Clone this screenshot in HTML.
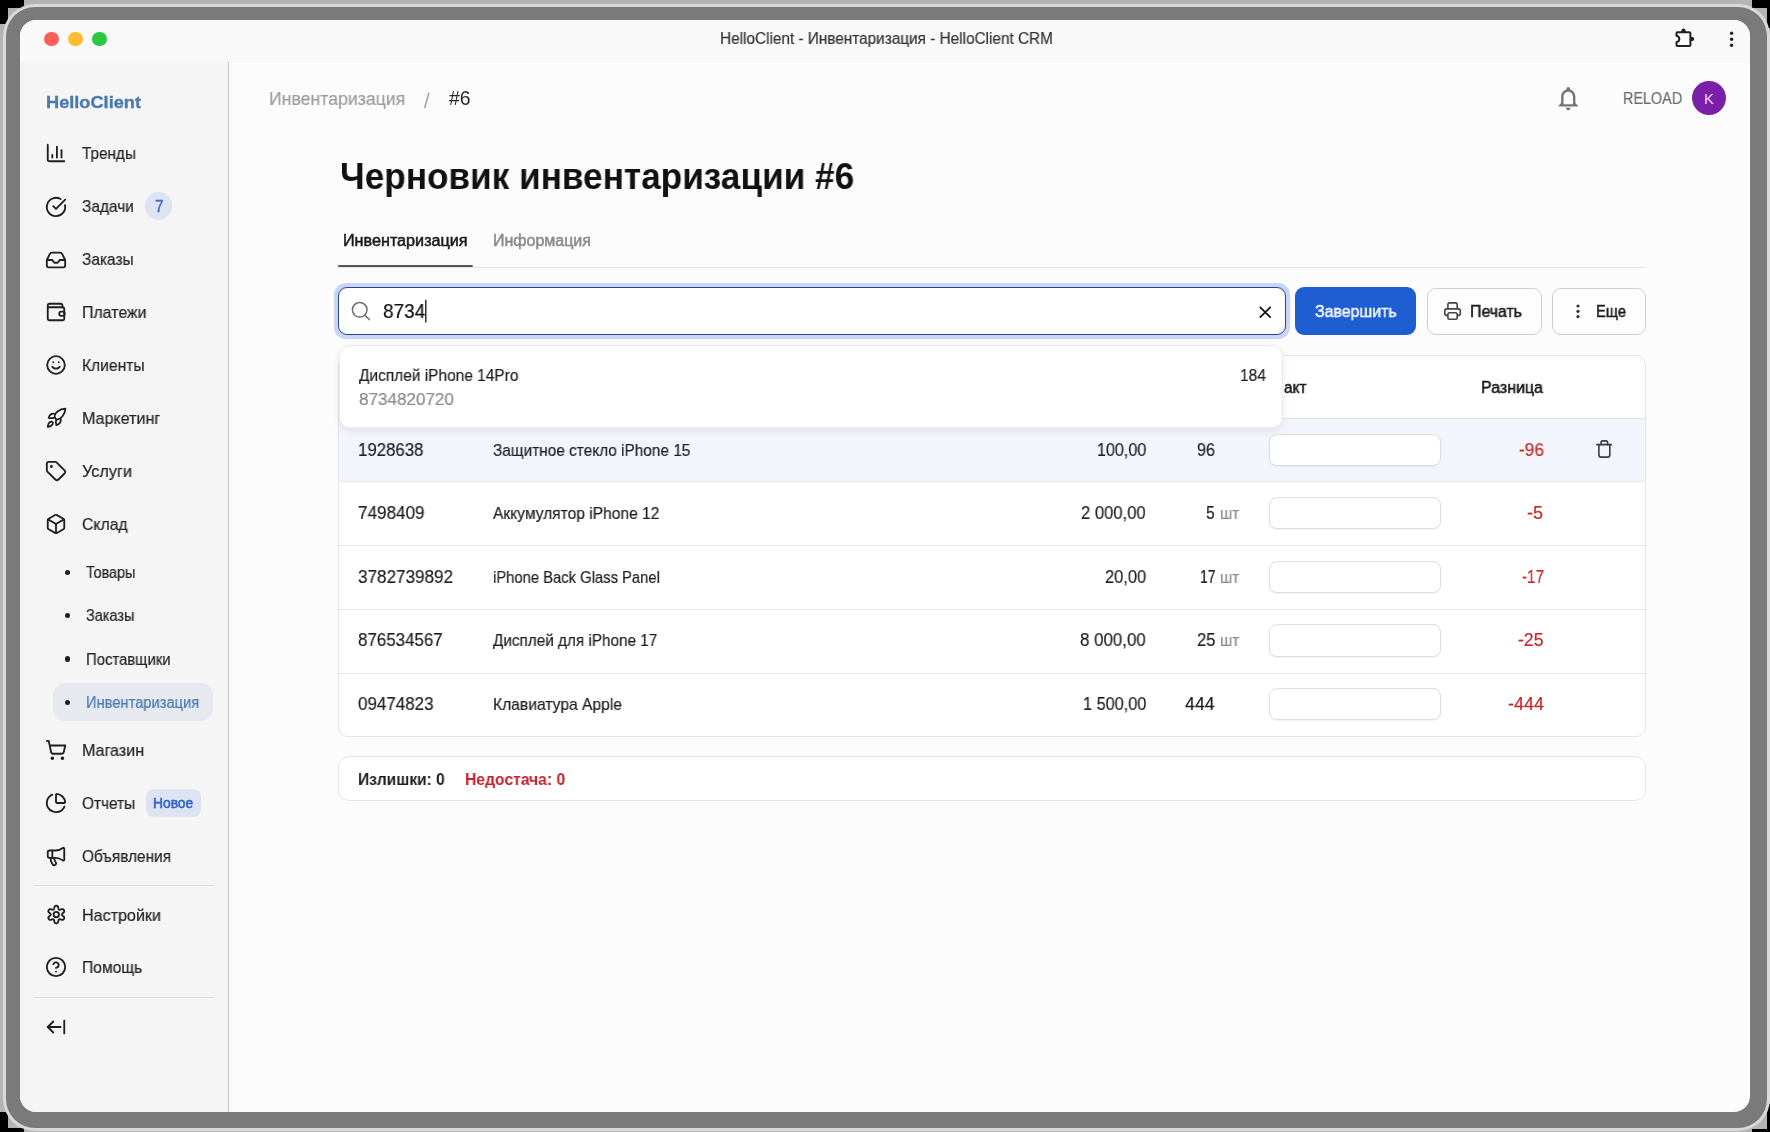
<!DOCTYPE html>
<html><head><meta charset="utf-8"><style>
*{box-sizing:border-box;margin:0;padding:0}
html,body{width:1770px;height:1132px;overflow:hidden;position:relative;background:#b4b4b4;font-family:"Liberation Sans",sans-serif;color:#1d1d1f}
.t{position:absolute;white-space:nowrap;line-height:1;will-change:transform}
.b{position:absolute}
svg{position:absolute;overflow:visible}
</style></head><body>
<div class="b" style="left:0;top:0;width:24px;height:8px;background:#000"></div><div class="b" style="left:0;top:0;width:8px;height:24px;background:#000"></div><div class="b" style="left:1752px;top:0;width:18px;height:7.5px;background:#000"></div><div class="b" style="left:1767px;top:0;width:3px;height:28px;background:#000"></div><div class="b" style="left:0;top:1112px;width:8px;height:20px;background:#000"></div><div class="b" style="left:0;top:1128px;width:24px;height:4px;background:#000"></div><div class="b" style="left:1752px;top:1129px;width:18px;height:3px;background:#000"></div><div class="b" style="left:1767px;top:1104px;width:3px;height:28px;background:#000"></div><div class="b" style="left:3px;top:3.5px;width:1766.5px;height:1127px;border-radius:32px;background:#d9d9d9"></div><div class="b" style="left:6px;top:7px;width:1761.4px;height:1121.3px;border-radius:29px;background:#7a7a7a"></div><div class="b" style="left:20px;top:20px;width:1730px;height:1092px;border-radius:16px;background:#fcfcfc;overflow:hidden"><div class="b" style="left:0;top:0;width:1730px;height:42px;background:#f9f9f9"></div><div class="b" style="left:0;top:42px;width:1730px;height:1px;background:#f8f8f8"></div><div class="b" style="left:0;top:42px;width:209px;height:1050px;background:#f5f5f5;border-right:1px solid #c8c8c8"></div></div>
<div class="b" style="left:44.25px;top:31.75px;width:14.5px;height:14.5px;border-radius:50%;background:#ff5f57"></div><div class="b" style="left:68.25px;top:31.75px;width:14.5px;height:14.5px;border-radius:50%;background:#febc2e"></div><div class="b" style="left:92.35px;top:31.75px;width:14.5px;height:14.5px;border-radius:50%;background:#28c840"></div>
<div class="t" style="left:720.10px;top:31.10px;font-size:15.8px;color:#333;font-weight:normal;letter-spacing:0.000px;transform:scaleX(0.9708);transform-origin:0 0;-webkit-text-stroke:0.2px #333;">HelloClient - Инвентаризация - HelloClient CRM</div>
<svg style="left:0;top:0" width="1770" height="1132" viewBox="0 0 1770 1132"><g fill="none" stroke="#222" stroke-width="2" stroke-linejoin="round">
<path d="M1676.5 33.2 Q1676.5 32.2 1677.5 32.2 H1689.4 Q1690.4 32.2 1690.4 33.2 V44.9 Q1690.4 45.9 1689.4 45.9 H1677.5 Q1676.5 45.9 1676.5 44.9 V42.3 Q1679.3 41.6 1679.3 39.05 Q1679.3 36.5 1676.5 35.8 Z"/>
</g><g fill="#222"><path d="M1681.2 32.2 Q1681.2 28.6 1683.5 28.6 Q1685.8 28.6 1685.8 32.2 Z"/><path d="M1690.4 36.8 Q1694.2 36.8 1694.2 39.05 Q1694.2 41.3 1690.4 41.3 Z"/><circle cx="1731.6" cy="33.2" r="1.7"/><circle cx="1731.6" cy="39.2" r="1.7"/><circle cx="1731.6" cy="45.3" r="1.7"/></g></svg>
<div class="t" style="left:45.90px;top:93.50px;font-size:17.4px;color:#4a78b0;font-weight:bold;letter-spacing:0.000px;transform:scaleX(1.0454);transform-origin:0 0;-webkit-text-stroke:0.35px #4a78b0;">HelloClient</div>
<div class="t" style="left:82.40px;top:145.20px;font-size:16.4px;color:#232323;font-weight:normal;letter-spacing:0.000px;transform:scaleX(0.9348);transform-origin:0 0;-webkit-text-stroke:0.2px #232323;">Тренды</div>
<svg style="left:45.10px;top:142.30px" width="22" height="22" viewBox="0 0 24 24" fill="none" stroke="#1f1f1f" stroke-width="2" stroke-linecap="round" stroke-linejoin="round"><path d="M3 3v16a2 2 0 0 0 2 2h16"/><path d="M18 17V9"/><path d="M13 17V5"/><path d="M8 17v-3"/></svg>
<div class="t" style="left:82.40px;top:198.40px;font-size:16.4px;color:#232323;font-weight:normal;letter-spacing:0.000px;transform:scaleX(0.9444);transform-origin:0 0;-webkit-text-stroke:0.2px #232323;">Задачи</div>
<svg style="left:45.10px;top:195.50px" width="22" height="22" viewBox="0 0 24 24" fill="none" stroke="#1f1f1f" stroke-width="2" stroke-linecap="round" stroke-linejoin="round"><path d="M21.801 10A10 10 0 1 1 17 3.335"/><path d="m9 11 3 3L22 4"/></svg>
<div class="t" style="left:82.40px;top:251.40px;font-size:16.4px;color:#232323;font-weight:normal;letter-spacing:0.000px;transform:scaleX(0.9413);transform-origin:0 0;-webkit-text-stroke:0.2px #232323;">Заказы</div>
<svg style="left:45.10px;top:248.50px" width="22" height="22" viewBox="0 0 24 24" fill="none" stroke="#1f1f1f" stroke-width="2" stroke-linecap="round" stroke-linejoin="round"><path d="M2 12h6l1.6 2.4a1.5 1.5 0 0 0 1.25.6h2.3a1.5 1.5 0 0 0 1.25-.6L16 12h6"/><path d="M5.45 5.11 2 12v6a2 2 0 0 0 2 2h16a2 2 0 0 0 2-2v-6l-3.45-6.89A2 2 0 0 0 16.76 4H7.24a2 2 0 0 0-1.79 1.11z"/></svg>
<div class="t" style="left:82.40px;top:304.20px;font-size:16.4px;color:#232323;font-weight:normal;letter-spacing:0.000px;transform:scaleX(0.9714);transform-origin:0 0;-webkit-text-stroke:0.2px #232323;">Платежи</div>
<svg style="left:45.10px;top:301.30px" width="22" height="22" viewBox="0 0 24 24" fill="none" stroke="#1f1f1f" stroke-width="2" stroke-linecap="round" stroke-linejoin="round"><path d="M3 6.8V5a2 2 0 0 1 2-2h12a2 2 0 0 1 2 2v1.8"/><path d="M3 6.8h16a2 2 0 0 1 2 2V19a2 2 0 0 1-2 2H5a2 2 0 0 1-2-2z"/><rect x="15.5" y="11.6" width="6" height="4.6" rx="2.2"/></svg>
<div class="t" style="left:82.40px;top:356.80px;font-size:16.4px;color:#232323;font-weight:normal;letter-spacing:0.000px;transform:scaleX(0.9519);transform-origin:0 0;-webkit-text-stroke:0.2px #232323;">Клиенты</div>
<svg style="left:45.10px;top:353.90px" width="22" height="22" viewBox="0 0 24 24" fill="none" stroke="#1f1f1f" stroke-width="2" stroke-linecap="round" stroke-linejoin="round"><circle cx="12" cy="12" r="9.6"/><path d="M8 14s1.5 2 4 2 4-2 4-2"/><path d="M9 9h.01"/><path d="M15 9h.01"/></svg>
<div class="t" style="left:82.40px;top:410.10px;font-size:16.4px;color:#232323;font-weight:normal;letter-spacing:0.000px;transform:scaleX(0.9806);transform-origin:0 0;-webkit-text-stroke:0.2px #232323;">Маркетинг</div>
<svg style="left:0;top:0" width="1770" height="1132"><g fill="none" stroke="#1f1f1f" stroke-width="1.75" stroke-linecap="round" stroke-linejoin="round"><path d="M55.3 418.4 C54.2 416.5 55 413.5 57.5 411.5 C60 409.5 63 408.7 65.4 408.6 C65.3 411 64.5 414 62.5 416.3 C60.5 418.5 58 419.8 56.8 419.3 C56.1 419.1 55.6 418.8 55.3 418.4 Z"/><path d="M54.8 414.1 C52.5 412.8 49.5 414.2 48.6 417.9 C50.5 418.4 52.8 418.2 54.2 417.6"/><path d="M60.6 418.6 C61.4 421.5 59.8 424.5 56.3 425.1 C55.6 423 55.7 421 56.3 419.6"/><path d="M47.7 427 C48 424.5 49.3 421.8 51.2 421.6 C52.6 421.5 53.3 422.6 52.6 424.2 C51.8 426 49.5 426.9 47.7 427 Z"/></g></svg>
<div class="t" style="left:82.40px;top:462.60px;font-size:16.4px;color:#232323;font-weight:normal;letter-spacing:0.000px;transform:scaleX(0.9915);transform-origin:0 0;-webkit-text-stroke:0.2px #232323;">Услуги</div>
<svg style="left:45.10px;top:459.70px" width="22" height="22" viewBox="0 0 24 24" fill="none" stroke="#1f1f1f" stroke-width="2" stroke-linecap="round" stroke-linejoin="round"><path d="M12.586 2.586A2 2 0 0 0 11.172 2H4a2 2 0 0 0-2 2v7.172a2 2 0 0 0 .586 1.414l8.704 8.704a2.426 2.426 0 0 0 3.42 0l6.58-6.58a2.426 2.426 0 0 0 0-3.42z"/><circle cx="7" cy="7" r=".6" fill="#1f1f1f"/></svg>
<div class="t" style="left:82.40px;top:515.80px;font-size:16.4px;color:#232323;font-weight:normal;letter-spacing:0.000px;transform:scaleX(0.9647);transform-origin:0 0;-webkit-text-stroke:0.2px #232323;">Склад</div>
<svg style="left:45.10px;top:512.90px" width="22" height="22" viewBox="0 0 24 24" fill="none" stroke="#1f1f1f" stroke-width="2" stroke-linecap="round" stroke-linejoin="round"><path d="M21 8a2 2 0 0 0-1-1.73l-7-4a2 2 0 0 0-2 0l-7 4A2 2 0 0 0 3 8v8a2 2 0 0 0 1 1.73l7 4a2 2 0 0 0 2 0l7-4A2 2 0 0 0 21 16Z"/><path d="m3.3 7 8.7 5 8.7-5"/><path d="M12 22V12"/></svg>
<div class="t" style="left:82.40px;top:742.00px;font-size:16.4px;color:#232323;font-weight:normal;letter-spacing:0.000px;transform:scaleX(0.9816);transform-origin:0 0;-webkit-text-stroke:0.2px #232323;">Магазин</div>
<svg style="left:45.10px;top:739.10px" width="22" height="22" viewBox="0 0 24 24" fill="none" stroke="#1f1f1f" stroke-width="2" stroke-linecap="round" stroke-linejoin="round"><circle cx="8" cy="21" r="1" fill="#1f1f1f"/><circle cx="19" cy="21" r="1" fill="#1f1f1f"/><path d="M2.05 2.05h2l2.66 12.42a2 2 0 0 0 2 1.58h9.78a2 2 0 0 0 1.95-1.57l1.65-7.43H5.12"/></svg>
<div class="t" style="left:82.40px;top:794.80px;font-size:16.4px;color:#232323;font-weight:normal;letter-spacing:0.000px;transform:scaleX(0.9400);transform-origin:0 0;-webkit-text-stroke:0.2px #232323;">Отчеты</div>
<svg style="left:45.10px;top:791.90px" width="22" height="22" viewBox="0 0 24 24" fill="none" stroke="#1f1f1f" stroke-width="2" stroke-linecap="round" stroke-linejoin="round"><path d="M21 12c.552 0 1.005-.449.95-.998a10 10 0 0 0-8.953-8.951c-.55-.055-.998.398-.998.95v8a1 1 0 0 0 1 1z"/><path d="M21.21 15.89A10 10 0 1 1 8 2.83"/></svg>
<div class="t" style="left:82.40px;top:847.70px;font-size:16.4px;color:#232323;font-weight:normal;letter-spacing:0.000px;transform:scaleX(0.9391);transform-origin:0 0;-webkit-text-stroke:0.2px #232323;">Объявления</div>
<svg style="left:45.10px;top:844.80px" width="22" height="22" viewBox="0 0 24 24" fill="none" stroke="#1f1f1f" stroke-width="2" stroke-linecap="round" stroke-linejoin="round"><path d="M11 6a13 13 0 0 0 8.4-2.8A1 1 0 0 1 21 4v12a1 1 0 0 1-1.6.8A13 13 0 0 0 11 14H5a2 2 0 0 1-2-2V8a2 2 0 0 1 2-2z"/><path d="M6 14a12 12 0 0 0 2.4 7.2 2 2 0 0 0 3.2-2.4A8 8 0 0 1 10 14"/><path d="M8 6v8"/></svg>
<div class="t" style="left:82.40px;top:906.80px;font-size:16.4px;color:#232323;font-weight:normal;letter-spacing:0.000px;transform:scaleX(0.9813);transform-origin:0 0;-webkit-text-stroke:0.2px #232323;">Настройки</div>
<div class="t" style="left:82.40px;top:959.30px;font-size:16.4px;color:#232323;font-weight:normal;letter-spacing:0.000px;transform:scaleX(0.9519);transform-origin:0 0;-webkit-text-stroke:0.2px #232323;">Помощь</div>
<svg style="left:45.10px;top:956.40px" width="22" height="22" viewBox="0 0 24 24" fill="none" stroke="#1f1f1f" stroke-width="2" stroke-linecap="round" stroke-linejoin="round"><circle cx="12" cy="12" r="10"/><path d="M9.09 9a3 3 0 0 1 5.83 1c0 2-3 3-3 3"/><path d="M12 17h.01"/></svg>
<svg style="left:0;top:0" width="1770" height="1132"><g fill="none" stroke="#1f1f1f" stroke-width="1.85" stroke-linejoin="round"><path d="M61.90 914.50 L61.93 914.70 L62.01 914.90 L62.15 915.11 L62.33 915.35 L62.55 915.60 L62.80 915.88 L63.08 916.19 L63.78 916.64 L64.04 917.02 L64.17 917.36 L64.21 917.70 L64.21 918.02 L64.15 918.33 L64.06 918.62 L63.92 918.90 L63.75 919.15 L63.54 919.39 L63.30 919.59 L63.03 919.75 L62.71 919.88 L62.35 919.95 L61.90 919.90 L61.16 919.53 L60.75 919.44 L60.38 919.36 L60.05 919.30 L59.75 919.26 L59.50 919.25 L59.28 919.28 L59.10 919.35 L58.94 919.47 L58.81 919.65 L58.69 919.87 L58.58 920.14 L58.47 920.46 L58.35 920.82 L58.23 921.22 L58.18 922.05 L57.99 922.47 L57.75 922.74 L57.49 922.95 L57.20 923.11 L56.91 923.21 L56.61 923.28 L56.30 923.30 L55.99 923.28 L55.69 923.21 L55.40 923.11 L55.11 922.95 L54.85 922.74 L54.61 922.47 L54.42 922.05 L54.37 921.22 L54.25 920.82 L54.13 920.46 L54.02 920.14 L53.91 919.87 L53.79 919.65 L53.66 919.47 L53.50 919.35 L53.32 919.28 L53.10 919.25 L52.85 919.26 L52.55 919.30 L52.22 919.36 L51.85 919.44 L51.44 919.53 L50.70 919.90 L50.25 919.95 L49.89 919.88 L49.57 919.75 L49.30 919.59 L49.06 919.39 L48.85 919.15 L48.68 918.90 L48.54 918.62 L48.45 918.33 L48.39 918.02 L48.39 917.70 L48.43 917.36 L48.56 917.02 L48.82 916.64 L49.52 916.19 L49.80 915.88 L50.05 915.60 L50.27 915.35 L50.45 915.11 L50.59 914.90 L50.67 914.70 L50.70 914.50 L50.67 914.30 L50.59 914.10 L50.45 913.89 L50.27 913.65 L50.05 913.40 L49.80 913.12 L49.52 912.81 L48.82 912.36 L48.56 911.98 L48.43 911.64 L48.39 911.30 L48.39 910.98 L48.45 910.67 L48.54 910.38 L48.68 910.10 L48.85 909.85 L49.06 909.61 L49.30 909.41 L49.57 909.25 L49.89 909.12 L50.25 909.05 L50.70 909.10 L51.44 909.47 L51.85 909.56 L52.22 909.64 L52.55 909.70 L52.85 909.74 L53.10 909.75 L53.32 909.72 L53.50 909.65 L53.66 909.53 L53.79 909.35 L53.91 909.13 L54.02 908.86 L54.13 908.54 L54.25 908.18 L54.37 907.78 L54.42 906.95 L54.61 906.53 L54.85 906.26 L55.11 906.05 L55.40 905.89 L55.69 905.79 L55.99 905.72 L56.30 905.70 L56.61 905.72 L56.91 905.79 L57.20 905.89 L57.49 906.05 L57.75 906.26 L57.99 906.53 L58.18 906.95 L58.23 907.78 L58.35 908.18 L58.47 908.54 L58.58 908.86 L58.69 909.13 L58.81 909.35 L58.94 909.53 L59.10 909.65 L59.28 909.72 L59.50 909.75 L59.75 909.74 L60.05 909.70 L60.38 909.64 L60.75 909.56 L61.16 909.47 L61.90 909.10 L62.35 909.05 L62.71 909.12 L63.03 909.25 L63.30 909.41 L63.54 909.61 L63.75 909.85 L63.92 910.10 L64.06 910.38 L64.15 910.67 L64.21 910.98 L64.21 911.30 L64.17 911.64 L64.04 911.98 L63.78 912.36 L63.08 912.81 L62.80 913.12 L62.55 913.40 L62.33 913.65 L62.15 913.89 L62.01 914.10 L61.93 914.30 Z"/><circle cx="56.3" cy="914.5" r="2.7"/></g></svg>
<svg style="left:45.30px;top:1015.50px" width="22" height="22" viewBox="0 0 24 24" fill="none" stroke="#1f1f1f" stroke-width="2" stroke-linecap="round" stroke-linejoin="round"><path d="m9 6-6 6 6 6"/><path d="M3 12h14"/><path d="M21 19V5"/></svg>
<div class="b" style="left:144.8px;top:192.4px;width:27.6px;height:27.6px;border-radius:50%;background:#dde3f2"></div><div class="t" style="left:154.50px;top:198.60px;font-size:15.6px;color:#3c6cd0;font-weight:normal;letter-spacing:0.000px;-webkit-text-stroke:0.2px #3c6cd0;-webkit-text-stroke:0.35px #3c6cd0;">7</div>
<div class="b" style="left:145.7px;top:788.6px;width:55.2px;height:28.3px;border-radius:8px;background:#dde3f2"></div><div class="t" style="left:153.20px;top:797.00px;font-size:13.8px;color:#2f62c9;font-weight:normal;letter-spacing:0.000px;transform:scaleX(0.9911);transform-origin:0 0;-webkit-text-stroke:0.5px #2f62c9;">Новое</div>
<div class="b" style="left:52.6px;top:682.8px;width:160.6px;height:38.6px;border-radius:12px;background:#e6e9ef"></div><div class="t" style="left:86.00px;top:565.30px;font-size:15.6px;color:#232323;font-weight:normal;letter-spacing:0.000px;transform:scaleX(0.9187);transform-origin:0 0;-webkit-text-stroke:0.2px #232323;">Товары</div>
<div class="b" style="left:64.9px;top:569.8px;width:5.4px;height:5.4px;border-radius:50%;background:#1f1f1f"></div><div class="t" style="left:86.00px;top:608.10px;font-size:15.6px;color:#232323;font-weight:normal;letter-spacing:0.000px;transform:scaleX(0.9282);transform-origin:0 0;-webkit-text-stroke:0.2px #232323;">Заказы</div>
<div class="b" style="left:64.9px;top:612.6px;width:5.4px;height:5.4px;border-radius:50%;background:#1f1f1f"></div><div class="t" style="left:86.00px;top:651.80px;font-size:15.6px;color:#232323;font-weight:normal;letter-spacing:0.000px;transform:scaleX(0.9535);transform-origin:0 0;-webkit-text-stroke:0.2px #232323;">Поставщики</div>
<div class="b" style="left:64.9px;top:656.3px;width:5.4px;height:5.4px;border-radius:50%;background:#1f1f1f"></div><div class="t" style="left:86.00px;top:695.20px;font-size:15.6px;color:#4a78b0;font-weight:normal;letter-spacing:0.000px;transform:scaleX(0.9418);transform-origin:0 0;-webkit-text-stroke:0.2px #4a78b0;">Инвентаризация</div>
<div class="b" style="left:64.9px;top:699.7px;width:5.4px;height:5.4px;border-radius:50%;background:#1f1f1f"></div><div class="b" style="left:34px;top:885px;width:180px;height:1px;background:#dedede"></div><div class="b" style="left:34px;top:997px;width:180px;height:1px;background:#dedede"></div><div class="t" style="left:268.50px;top:90.10px;font-size:18.9px;color:#9c9c9c;font-weight:normal;letter-spacing:0.000px;transform:scaleX(0.9360);transform-origin:0 0;-webkit-text-stroke:0.2px #9c9c9c;">Инвентаризация</div>
<svg style="left:0;top:0" width="1770" height="1132"><path d="M428.9 92.8 L424.7 108" stroke="#a6a6a6" stroke-width="1.6" fill="none"/></svg><div class="t" style="left:448.70px;top:89.10px;font-size:19.3px;color:#262626;font-weight:normal;letter-spacing:0.000px;transform:scaleX(1.0060);transform-origin:0 0;-webkit-text-stroke:0.2px #262626;-webkit-text-stroke:0px;">#6</div>
<svg style="left:1554.35px;top:83.8px" width="28.5" height="28.5" viewBox="0 0 24 24"><path fill="#757575" d="M12 22c1.1 0 2-.9 2-2h-4c0 1.1.89 2 2 2zm6-6v-5c0-3.07-1.64-5.64-4.5-6.32V4c0-.83-.67-1.5-1.5-1.5s-1.5.67-1.5 1.5v.68C7.63 5.36 6 7.92 6 11v5l-2 2v1h16v-1l-2-2zm-2 1H8v-6c0-2.48 1.51-4.5 4-4.5s4 2.02 4 4.5v6z"/></svg>
<div class="t" style="left:1622.80px;top:89.90px;font-size:16.2px;color:#6b6b6b;font-weight:normal;letter-spacing:0.000px;transform:scaleX(0.8886);transform-origin:0 0;-webkit-text-stroke:0.2px #6b6b6b;">RELOAD</div>
<div class="b" style="left:1692px;top:81.1px;width:34px;height:34px;border-radius:50%;background:#7b1fa8"></div><div class="t" style="left:1704.30px;top:91.70px;font-size:14.5px;color:#f4c6f7;font-weight:normal;letter-spacing:0.000px;-webkit-text-stroke:0.2px #f4c6f7;">K</div>
<div class="t" style="left:339.50px;top:158.50px;font-size:36.6px;color:#111;font-weight:bold;letter-spacing:0.000px;transform:scaleX(0.9615);transform-origin:0 0;">Черновик инвентаризации #6</div>
<div class="t" style="left:343.00px;top:233.00px;font-size:16px;color:#1a1a1a;font-weight:normal;letter-spacing:0.000px;transform:scaleX(1.0107);transform-origin:0 0;-webkit-text-stroke:0.5px #1a1a1a;">Инвентаризация</div>
<div class="t" style="left:492.90px;top:233.00px;font-size:16px;color:#8a8a8a;font-weight:normal;letter-spacing:0.000px;transform:scaleX(0.9984);transform-origin:0 0;-webkit-text-stroke:0.5px #8a8a8a;">Информация</div>
<div class="b" style="left:338px;top:266.5px;width:1307px;height:1px;background:#e4e4e4"></div><div class="b" style="left:338px;top:265px;width:135px;height:2px;border-radius:1px;background:#585858"></div>
<div class="b" style="left:333.5px;top:282.5px;width:956px;height:56.5px;border-radius:12px;background:#c9d4f6"></div><div class="b" style="left:337.5px;top:286.8px;width:948px;height:48px;border-radius:9px;background:#fff;border:1.6px solid #24488f"></div><svg style="left:0;top:0" width="1770" height="1132"><g fill="none" stroke="#6f6f6f" stroke-width="1.5" stroke-linecap="round"><circle cx="359.7" cy="309.8" r="7.3"/><path d="M365 315.2 L369.3 319.6"/></g><g fill="none" stroke="#111" stroke-width="1.7" stroke-linecap="round"><path d="M1260.3 307.3 L1270.2 317.2 M1270.2 307.3 L1260.3 317.2"/></g><path d="M425.8 299.8 V322.6" stroke="#111" stroke-width="1.3"/></svg>
<div class="t" style="left:382.70px;top:301.30px;font-size:20.2px;color:#111;font-weight:normal;letter-spacing:0.000px;transform:scaleX(0.9389);transform-origin:0 0;-webkit-text-stroke:0.2px #111;">8734</div>
<div class="b" style="left:1295.3px;top:287px;width:121px;height:48px;border-radius:9px;background:#1f5ed2"></div><div class="t" style="left:1315.00px;top:302.70px;font-size:16.2px;color:#f2f6ff;font-weight:normal;letter-spacing:0.000px;transform:scaleX(0.9814);transform-origin:0 0;-webkit-text-stroke:0.5px #f2f6ff;">Завершить</div>
<div class="b" style="left:1426.5px;top:287.5px;width:115px;height:47px;border-radius:9px;background:#fdfdfd;border:1px solid #cfcfcf"></div><div class="b" style="left:1552.2px;top:287.5px;width:93.6px;height:47px;border-radius:9px;background:#fdfdfd;border:1px solid #cfcfcf"></div><div class="t" style="left:1470.40px;top:302.90px;font-size:16.2px;color:#1a1a1a;font-weight:normal;letter-spacing:0.000px;transform:scaleX(0.9801);transform-origin:0 0;-webkit-text-stroke:0.5px #1a1a1a;">Печать</div>
<div class="t" style="left:1596.00px;top:302.90px;font-size:16.2px;color:#1a1a1a;font-weight:normal;letter-spacing:0.000px;transform:scaleX(0.9100);transform-origin:0 0;-webkit-text-stroke:0.5px #1a1a1a;">Еще</div>
<svg style="left:0;top:0" width="1770" height="1132"><g fill="none" stroke="#444" stroke-width="1.6" stroke-linejoin="round">
<path d="M1447.6 315.4 H1446.6 Q1444.8 315.4 1444.8 313.6 V310.7 Q1444.8 308.9 1446.6 308.9 H1458.5 Q1460.3 308.9 1460.3 310.7 V313.6 Q1460.3 315.4 1458.5 315.4 H1457.5"/>
<path d="M1447.9 308.9 V304.6 Q1447.9 302.9 1449.6 302.9 H1455.5 Q1457.2 302.9 1457.2 304.6 V308.9"/>
<rect x="1447.9" y="312.7" width="9.3" height="6.5" rx="1.7"/></g>
<g fill="#333"><circle cx="1578" cy="306" r="1.6"/><circle cx="1578" cy="311.3" r="1.6"/><circle cx="1578" cy="316.6" r="1.6"/></g></svg>
<div class="b" style="left:338px;top:354.5px;width:1308px;height:382px;border-radius:10px;background:#fff;border:1px solid #e4e4e4;overflow:hidden"><div class="b" style="left:0;top:62px;width:1308px;height:1px;background:#e2e2e2"></div><div class="b" style="left:0;top:63px;width:1308px;height:62px;background:#f2f5fc"></div><div class="b" style="left:0;top:125px;width:1308px;height:1px;background:#e9e9e9"></div><div class="b" style="left:0;top:189px;width:1308px;height:1px;background:#e9e9e9"></div><div class="b" style="left:0;top:253px;width:1308px;height:1px;background:#e9e9e9"></div><div class="b" style="left:0;top:317px;width:1308px;height:1px;background:#e9e9e9"></div></div>
<div class="t" style="left:1283.80px;top:378.80px;font-size:17.2px;color:#1a1a1a;font-weight:normal;letter-spacing:0.000px;transform:scaleX(0.8984);transform-origin:0 0;-webkit-text-stroke:0.5px #1a1a1a;">акт</div>
<div class="t" style="left:1481.00px;top:378.80px;font-size:17.2px;color:#1a1a1a;font-weight:normal;letter-spacing:0.000px;transform:scaleX(0.9296);transform-origin:0 0;-webkit-text-stroke:0.5px #1a1a1a;">Разница</div>
<div class="t" style="left:358.20px;top:441.50px;font-size:17.8px;color:#1f1f1f;font-weight:normal;letter-spacing:0.000px;transform:scaleX(0.9454);transform-origin:0 0;-webkit-text-stroke:0.2px #1f1f1f;">1928638</div>
<div class="t" style="left:492.90px;top:442.50px;font-size:16.6px;color:#1f1f1f;font-weight:normal;letter-spacing:0.000px;transform:scaleX(0.9275);transform-origin:0 0;-webkit-text-stroke:0.2px #1f1f1f;">Защитное стекло iPhone 15</div>
<div class="t" style="left:1096.70px;top:441.50px;font-size:17.6px;color:#1f1f1f;font-weight:normal;letter-spacing:0.000px;transform:scaleX(0.9162);transform-origin:0 0;-webkit-text-stroke:0.2px #1f1f1f;">100,00</div>
<div class="t" style="left:1197.10px;top:441.50px;font-size:17.6px;color:#1f1f1f;font-weight:normal;letter-spacing:0.000px;transform:scaleX(0.9193);transform-origin:0 0;-webkit-text-stroke:0.2px #1f1f1f;">96</div>
<div class="t" style="left:1518.60px;top:441.50px;font-size:17.6px;color:#c62828;font-weight:normal;letter-spacing:0.000px;transform:scaleX(0.9791);transform-origin:0 0;-webkit-text-stroke:0.2px #c62828;">-96</div>
<div class="b" style="left:1269.3px;top:433.5px;width:172px;height:32.3px;border-radius:8px;background:#fff;border:1px solid #dedede;box-shadow:0 1px 2px rgba(0,0,0,0.05)"></div><div class="t" style="left:358.20px;top:505.15px;font-size:17.8px;color:#1f1f1f;font-weight:normal;letter-spacing:0.000px;transform:scaleX(0.9612);transform-origin:0 0;-webkit-text-stroke:0.2px #1f1f1f;">7498409</div>
<div class="t" style="left:492.90px;top:506.15px;font-size:16.6px;color:#1f1f1f;font-weight:normal;letter-spacing:0.000px;transform:scaleX(0.9387);transform-origin:0 0;-webkit-text-stroke:0.2px #1f1f1f;">Аккумулятор iPhone 12</div>
<div class="t" style="left:1081.40px;top:505.15px;font-size:17.6px;color:#1f1f1f;font-weight:normal;letter-spacing:0.000px;transform:scaleX(0.9430);transform-origin:0 0;-webkit-text-stroke:0.2px #1f1f1f;">2 000,00</div>
<div class="t" style="left:1206.40px;top:505.15px;font-size:17.6px;color:#1f1f1f;font-weight:normal;letter-spacing:0.000px;transform:scaleX(0.8907);transform-origin:0 0;-webkit-text-stroke:0.2px #1f1f1f;">5</div>
<div class="t" style="left:1220.30px;top:506.15px;font-size:16px;color:#8a8a8a;font-weight:normal;letter-spacing:0.000px;transform:scaleX(0.9573);transform-origin:0 0;-webkit-text-stroke:0.2px #8a8a8a;">шт</div>
<div class="t" style="left:1527.40px;top:505.15px;font-size:17.6px;color:#c62828;font-weight:normal;letter-spacing:0.000px;transform:scaleX(1.0278);transform-origin:0 0;-webkit-text-stroke:0.2px #c62828;">-5</div>
<div class="b" style="left:1269.3px;top:497.15px;width:172px;height:32.3px;border-radius:8px;background:#fff;border:1px solid #dedede;box-shadow:0 1px 2px rgba(0,0,0,0.05)"></div><div class="t" style="left:358.20px;top:568.80px;font-size:17.8px;color:#1f1f1f;font-weight:normal;letter-spacing:0.000px;transform:scaleX(0.9615);transform-origin:0 0;-webkit-text-stroke:0.2px #1f1f1f;">3782739892</div>
<div class="t" style="left:492.90px;top:569.80px;font-size:16.6px;color:#1f1f1f;font-weight:normal;letter-spacing:0.000px;transform:scaleX(0.8915);transform-origin:0 0;-webkit-text-stroke:0.2px #1f1f1f;">iPhone Back Glass Panel</div>
<div class="t" style="left:1104.80px;top:568.80px;font-size:17.6px;color:#1f1f1f;font-weight:normal;letter-spacing:0.000px;transform:scaleX(0.9354);transform-origin:0 0;-webkit-text-stroke:0.2px #1f1f1f;">20,00</div>
<div class="t" style="left:1199.50px;top:568.80px;font-size:17.6px;color:#1f1f1f;font-weight:normal;letter-spacing:0.000px;transform:scaleX(0.7967);transform-origin:0 0;-webkit-text-stroke:0.2px #1f1f1f;">17</div>
<div class="t" style="left:1220.30px;top:569.80px;font-size:16px;color:#8a8a8a;font-weight:normal;letter-spacing:0.000px;transform:scaleX(0.9573);transform-origin:0 0;-webkit-text-stroke:0.2px #8a8a8a;">шт</div>
<div class="t" style="left:1521.50px;top:568.80px;font-size:17.6px;color:#c62828;font-weight:normal;letter-spacing:0.000px;transform:scaleX(0.8651);transform-origin:0 0;-webkit-text-stroke:0.2px #c62828;">-17</div>
<div class="b" style="left:1269.3px;top:560.8px;width:172px;height:32.3px;border-radius:8px;background:#fff;border:1px solid #dedede;box-shadow:0 1px 2px rgba(0,0,0,0.05)"></div><div class="t" style="left:358.20px;top:632.45px;font-size:17.8px;color:#1f1f1f;font-weight:normal;letter-spacing:0.000px;transform:scaleX(0.9519);transform-origin:0 0;-webkit-text-stroke:0.2px #1f1f1f;">876534567</div>
<div class="t" style="left:492.90px;top:633.45px;font-size:16.6px;color:#1f1f1f;font-weight:normal;letter-spacing:0.000px;transform:scaleX(0.9217);transform-origin:0 0;-webkit-text-stroke:0.2px #1f1f1f;">Дисплей для iPhone 17</div>
<div class="t" style="left:1080.30px;top:632.45px;font-size:17.6px;color:#1f1f1f;font-weight:normal;letter-spacing:0.000px;transform:scaleX(0.9590);transform-origin:0 0;-webkit-text-stroke:0.2px #1f1f1f;">8 000,00</div>
<div class="t" style="left:1196.70px;top:632.45px;font-size:17.6px;color:#1f1f1f;font-weight:normal;letter-spacing:0.000px;transform:scaleX(0.9397);transform-origin:0 0;-webkit-text-stroke:0.2px #1f1f1f;">25</div>
<div class="t" style="left:1220.30px;top:633.45px;font-size:16px;color:#8a8a8a;font-weight:normal;letter-spacing:0.000px;transform:scaleX(0.9573);transform-origin:0 0;-webkit-text-stroke:0.2px #8a8a8a;">шт</div>
<div class="t" style="left:1518.00px;top:632.45px;font-size:17.6px;color:#c62828;font-weight:normal;letter-spacing:0.000px;transform:scaleX(1.0027);transform-origin:0 0;-webkit-text-stroke:0.2px #c62828;">-25</div>
<div class="b" style="left:1269.3px;top:624.45px;width:172px;height:32.3px;border-radius:8px;background:#fff;border:1px solid #dedede;box-shadow:0 1px 2px rgba(0,0,0,0.05)"></div><div class="t" style="left:358.20px;top:696.10px;font-size:17.8px;color:#1f1f1f;font-weight:normal;letter-spacing:0.000px;transform:scaleX(0.9544);transform-origin:0 0;-webkit-text-stroke:0.2px #1f1f1f;">09474823</div>
<div class="t" style="left:492.90px;top:697.10px;font-size:16.6px;color:#1f1f1f;font-weight:normal;letter-spacing:0.000px;transform:scaleX(0.9417);transform-origin:0 0;-webkit-text-stroke:0.2px #1f1f1f;">Клавиатура Apple</div>
<div class="t" style="left:1082.70px;top:696.10px;font-size:17.6px;color:#1f1f1f;font-weight:normal;letter-spacing:0.000px;transform:scaleX(0.9240);transform-origin:0 0;-webkit-text-stroke:0.2px #1f1f1f;">1 500,00</div>
<div class="t" style="left:1185.40px;top:696.10px;font-size:17.6px;color:#1f1f1f;font-weight:normal;letter-spacing:0.000px;transform:scaleX(1.0120);transform-origin:0 0;-webkit-text-stroke:0.2px #1f1f1f;">444</div>
<div class="t" style="left:1507.50px;top:696.10px;font-size:17.6px;color:#c62828;font-weight:normal;letter-spacing:0.000px;transform:scaleX(1.0215);transform-origin:0 0;-webkit-text-stroke:0.2px #c62828;">-444</div>
<div class="b" style="left:1269.3px;top:688.1px;width:172px;height:32.3px;border-radius:8px;background:#fff;border:1px solid #dedede;box-shadow:0 1px 2px rgba(0,0,0,0.05)"></div><svg style="left:0;top:0" width="1770" height="1132"><g fill="none" stroke="#3d3d3d" stroke-width="1.6" stroke-linecap="round" stroke-linejoin="round">
<path d="M1596.8 444.6 H1611.3"/><path d="M1601 444.6 V442.6 Q1601 440.9 1602.7 440.9 H1605.9 Q1607.6 440.9 1607.6 442.6 V444.6"/>
<path d="M1598.9 444.6 V455 Q1598.9 457.1 1601 457.1 H1607.7 Q1609.8 457.1 1609.8 455 V444.6"/></g></svg>
<div class="b" style="left:338.6px;top:345px;width:944.6px;height:82.8px;border-radius:11px;background:#fff;border:1px solid #ececec;box-shadow:0 3px 8px rgba(0,0,0,0.08)"></div><div class="t" style="left:359.20px;top:367.20px;font-size:16.4px;color:#1f1f1f;font-weight:normal;letter-spacing:0.000px;transform:scaleX(0.9429);transform-origin:0 0;-webkit-text-stroke:0.2px #1f1f1f;">Дисплей iPhone 14Pro</div>
<div class="t" style="left:359.20px;top:391.20px;font-size:17.4px;color:#8a8a8a;font-weight:normal;letter-spacing:0.000px;transform:scaleX(0.9815);transform-origin:0 0;-webkit-text-stroke:0.2px #8a8a8a;">8734820720</div>
<div class="t" style="left:1239.70px;top:366.70px;font-size:17.3px;color:#1f1f1f;font-weight:normal;letter-spacing:0.000px;transform:scaleX(0.9013);transform-origin:0 0;-webkit-text-stroke:0.2px #1f1f1f;">184</div>
<div class="b" style="left:338.4px;top:756.4px;width:1307.5px;height:44.7px;border-radius:11px;background:#fff;border:1px solid #e4e4e4"></div><div class="t" style="left:357.80px;top:772.00px;font-size:16.8px;color:#1f1f1f;font-weight:bold;letter-spacing:0.000px;transform:scaleX(0.9291);transform-origin:0 0;">Излишки: 0</div>
<div class="t" style="left:464.80px;top:772.00px;font-size:16.8px;color:#c5222b;font-weight:bold;letter-spacing:0.000px;transform:scaleX(0.9339);transform-origin:0 0;">Недостача: 0</div>
</body></html>
